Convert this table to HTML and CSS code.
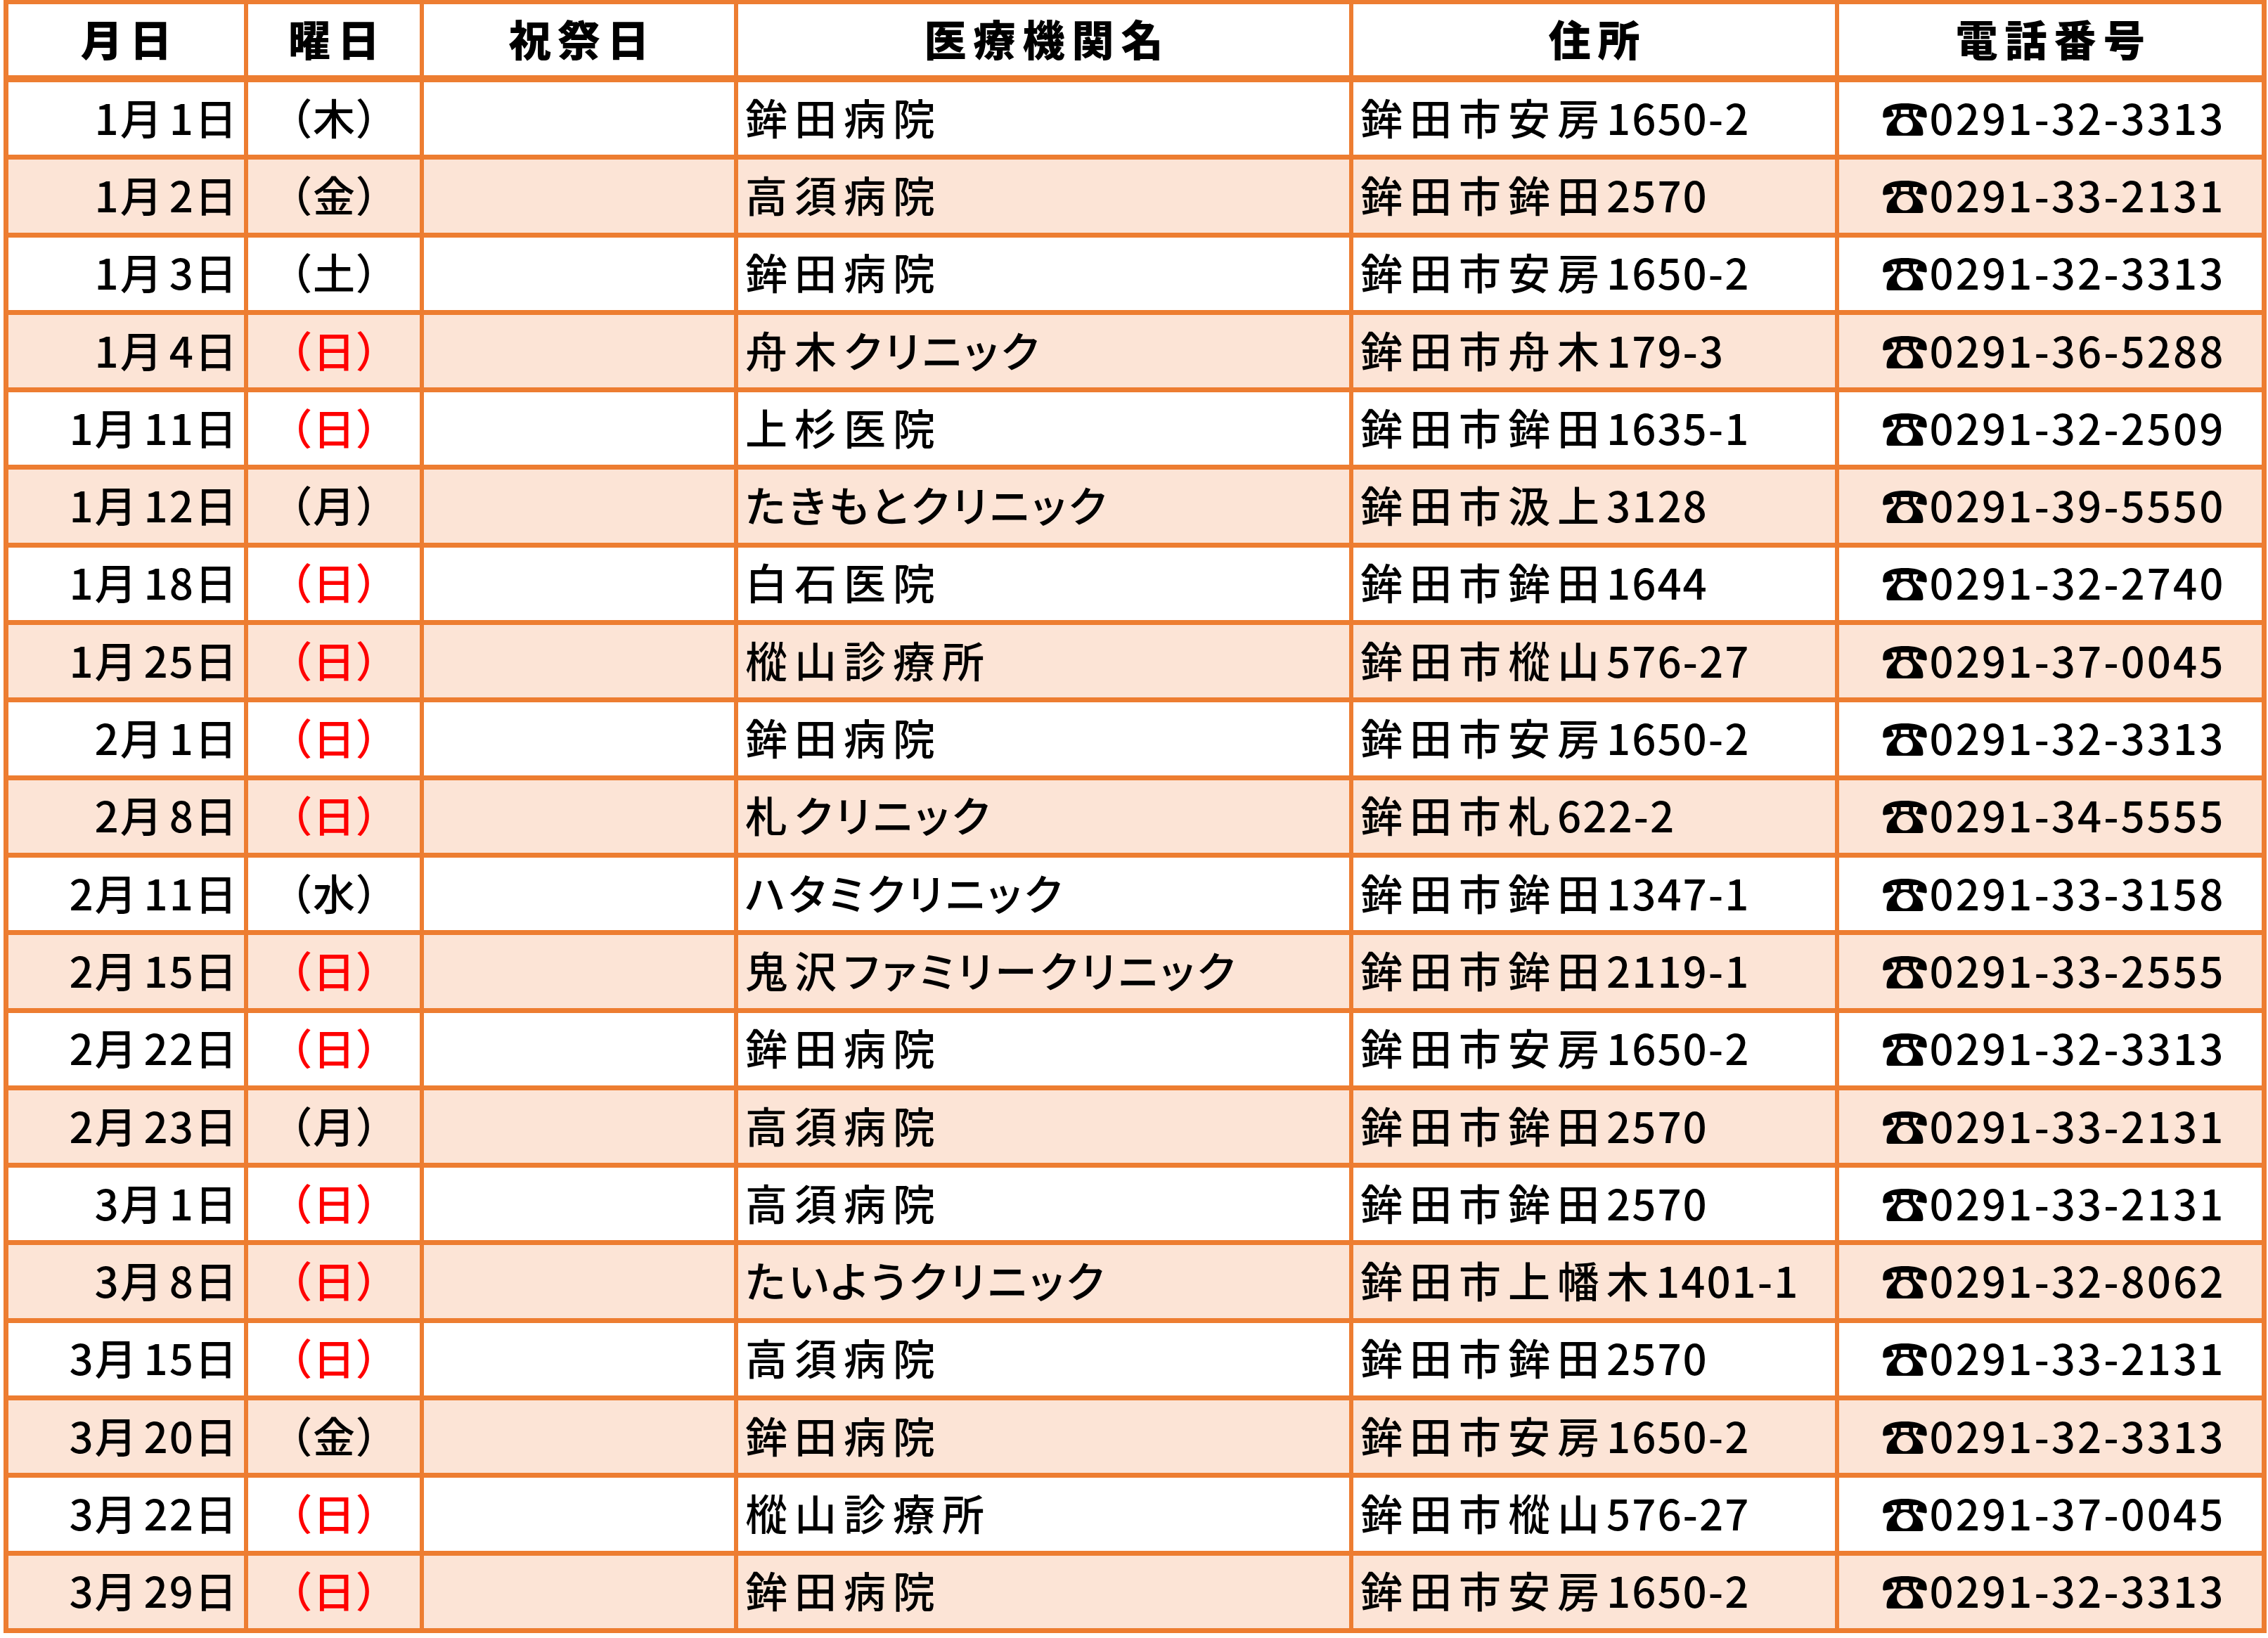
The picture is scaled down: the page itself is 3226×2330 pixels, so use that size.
FILE: index.html
```html
<!DOCTYPE html>
<html lang="ja">
<head>
<meta charset="utf-8">
<title>休日当番医</title>
<link rel="stylesheet" href="styles.css">
</head>
<body>
<div class="sheet">
  <div class="row head">
    <div class="c">月日</div>
    <div class="c">曜日</div>
    <div class="c">祝祭日</div>
    <div class="c">医療機関名</div>
    <div class="c">住所</div>
    <div class="c">電話番号</div>
  </div>
  <div class="row">
    <div class="c date"><span class="n">1</span>月<span class="n">1</span>日</div>
    <div class="c wd">（木）</div>
    <div class="c hol"></div>
    <div class="c name">鉾田病院</div>
    <div class="c addr">鉾田市安房<span class="n">1650-2</span></div>
    <div class="c tel"><span class="icon">☎</span>0291-32-3313</div>
  </div>
  <div class="row alt">
    <div class="c date"><span class="n">1</span>月<span class="n">2</span>日</div>
    <div class="c wd">（金）</div>
    <div class="c hol"></div>
    <div class="c name">高須病院</div>
    <div class="c addr">鉾田市鉾田<span class="n">2570</span></div>
    <div class="c tel"><span class="icon">☎</span>0291-33-2131</div>
  </div>
  <div class="row">
    <div class="c date"><span class="n">1</span>月<span class="n">3</span>日</div>
    <div class="c wd">（土）</div>
    <div class="c hol"></div>
    <div class="c name">鉾田病院</div>
    <div class="c addr">鉾田市安房<span class="n">1650-2</span></div>
    <div class="c tel"><span class="icon">☎</span>0291-32-3313</div>
  </div>
  <div class="row alt">
    <div class="c date"><span class="n">1</span>月<span class="n">4</span>日</div>
    <div class="c wd sun">（日）</div>
    <div class="c hol"></div>
    <div class="c name">舟木<span class="k">クリニック</span></div>
    <div class="c addr">鉾田市舟木<span class="n">179-3</span></div>
    <div class="c tel"><span class="icon">☎</span>0291-36-5288</div>
  </div>
  <div class="row">
    <div class="c date"><span class="n">1</span>月<span class="n">11</span>日</div>
    <div class="c wd sun">（日）</div>
    <div class="c hol"></div>
    <div class="c name">上杉医院</div>
    <div class="c addr">鉾田市鉾田<span class="n">1635-1</span></div>
    <div class="c tel"><span class="icon">☎</span>0291-32-2509</div>
  </div>
  <div class="row alt">
    <div class="c date"><span class="n">1</span>月<span class="n">12</span>日</div>
    <div class="c wd">（月）</div>
    <div class="c hol"></div>
    <div class="c name"><span class="k">たきもとクリニック</span></div>
    <div class="c addr">鉾田市汲上<span class="n">3128</span></div>
    <div class="c tel"><span class="icon">☎</span>0291-39-5550</div>
  </div>
  <div class="row">
    <div class="c date"><span class="n">1</span>月<span class="n">18</span>日</div>
    <div class="c wd sun">（日）</div>
    <div class="c hol"></div>
    <div class="c name">白石医院</div>
    <div class="c addr">鉾田市鉾田<span class="n">1644</span></div>
    <div class="c tel"><span class="icon">☎</span>0291-32-2740</div>
  </div>
  <div class="row alt">
    <div class="c date"><span class="n">1</span>月<span class="n">25</span>日</div>
    <div class="c wd sun">（日）</div>
    <div class="c hol"></div>
    <div class="c name">樅山診療所</div>
    <div class="c addr">鉾田市樅山<span class="n">576-27</span></div>
    <div class="c tel"><span class="icon">☎</span>0291-37-0045</div>
  </div>
  <div class="row">
    <div class="c date"><span class="n">2</span>月<span class="n">1</span>日</div>
    <div class="c wd sun">（日）</div>
    <div class="c hol"></div>
    <div class="c name">鉾田病院</div>
    <div class="c addr">鉾田市安房<span class="n">1650-2</span></div>
    <div class="c tel"><span class="icon">☎</span>0291-32-3313</div>
  </div>
  <div class="row alt">
    <div class="c date"><span class="n">2</span>月<span class="n">8</span>日</div>
    <div class="c wd sun">（日）</div>
    <div class="c hol"></div>
    <div class="c name">札<span class="k">クリニック</span></div>
    <div class="c addr">鉾田市札<span class="n">622-2</span></div>
    <div class="c tel"><span class="icon">☎</span>0291-34-5555</div>
  </div>
  <div class="row">
    <div class="c date"><span class="n">2</span>月<span class="n">11</span>日</div>
    <div class="c wd">（水）</div>
    <div class="c hol"></div>
    <div class="c name"><span class="k">ハタミクリニック</span></div>
    <div class="c addr">鉾田市鉾田<span class="n">1347-1</span></div>
    <div class="c tel"><span class="icon">☎</span>0291-33-3158</div>
  </div>
  <div class="row alt">
    <div class="c date"><span class="n">2</span>月<span class="n">15</span>日</div>
    <div class="c wd sun">（日）</div>
    <div class="c hol"></div>
    <div class="c name">鬼沢<span class="k">ファミリークリニック</span></div>
    <div class="c addr">鉾田市鉾田<span class="n">2119-1</span></div>
    <div class="c tel"><span class="icon">☎</span>0291-33-2555</div>
  </div>
  <div class="row">
    <div class="c date"><span class="n">2</span>月<span class="n">22</span>日</div>
    <div class="c wd sun">（日）</div>
    <div class="c hol"></div>
    <div class="c name">鉾田病院</div>
    <div class="c addr">鉾田市安房<span class="n">1650-2</span></div>
    <div class="c tel"><span class="icon">☎</span>0291-32-3313</div>
  </div>
  <div class="row alt">
    <div class="c date"><span class="n">2</span>月<span class="n">23</span>日</div>
    <div class="c wd">（月）</div>
    <div class="c hol"></div>
    <div class="c name">高須病院</div>
    <div class="c addr">鉾田市鉾田<span class="n">2570</span></div>
    <div class="c tel"><span class="icon">☎</span>0291-33-2131</div>
  </div>
  <div class="row">
    <div class="c date"><span class="n">3</span>月<span class="n">1</span>日</div>
    <div class="c wd sun">（日）</div>
    <div class="c hol"></div>
    <div class="c name">高須病院</div>
    <div class="c addr">鉾田市鉾田<span class="n">2570</span></div>
    <div class="c tel"><span class="icon">☎</span>0291-33-2131</div>
  </div>
  <div class="row alt">
    <div class="c date"><span class="n">3</span>月<span class="n">8</span>日</div>
    <div class="c wd sun">（日）</div>
    <div class="c hol"></div>
    <div class="c name"><span class="k">たいようクリニック</span></div>
    <div class="c addr">鉾田市上幡木<span class="n">1401-1</span></div>
    <div class="c tel"><span class="icon">☎</span>0291-32-8062</div>
  </div>
  <div class="row">
    <div class="c date"><span class="n">3</span>月<span class="n">15</span>日</div>
    <div class="c wd sun">（日）</div>
    <div class="c hol"></div>
    <div class="c name">高須病院</div>
    <div class="c addr">鉾田市鉾田<span class="n">2570</span></div>
    <div class="c tel"><span class="icon">☎</span>0291-33-2131</div>
  </div>
  <div class="row alt">
    <div class="c date"><span class="n">3</span>月<span class="n">20</span>日</div>
    <div class="c wd">（金）</div>
    <div class="c hol"></div>
    <div class="c name">鉾田病院</div>
    <div class="c addr">鉾田市安房<span class="n">1650-2</span></div>
    <div class="c tel"><span class="icon">☎</span>0291-32-3313</div>
  </div>
  <div class="row">
    <div class="c date"><span class="n">3</span>月<span class="n">22</span>日</div>
    <div class="c wd sun">（日）</div>
    <div class="c hol"></div>
    <div class="c name">樅山診療所</div>
    <div class="c addr">鉾田市樅山<span class="n">576-27</span></div>
    <div class="c tel"><span class="icon">☎</span>0291-37-0045</div>
  </div>
  <div class="row alt">
    <div class="c date"><span class="n">3</span>月<span class="n">29</span>日</div>
    <div class="c wd sun">（日）</div>
    <div class="c hol"></div>
    <div class="c name">鉾田病院</div>
    <div class="c addr">鉾田市安房<span class="n">1650-2</span></div>
    <div class="c tel"><span class="icon">☎</span>0291-32-3313</div>
  </div>
</div>
</body>
</html>
```

FILE: styles.css
```css
html, body {
  margin: 0;
  padding: 0;
  background: #ffffff;
}

.sheet {
  margin-left: 5px;
  width: 3219px;
  box-sizing: border-box;
  background: #ed7d31;
  padding: 6px 7px 7px 7px;
  display: flex;
  flex-direction: column;
  gap: 7px;
}

.row {
  display: grid;
  grid-template-columns: 335px 244px 441px 869px 685px 601px;
  column-gap: 6px;
  height: 103.3px;
}

.row.head {
  height: 101px;
  margin-bottom: 3px;
}

.c {
  background: #ffffff;
  display: flex;
  align-items: center;
  box-sizing: border-box;
  font-family: "Noto Sans CJK JP", "Noto Sans", sans-serif;
  font-size: 60px;
  font-weight: 500;
  line-height: 1;
  letter-spacing: 10px;
  font-feature-settings: "palt";
  color: #000000;
  white-space: nowrap;
  padding-bottom: 6px;
}

.row.alt .c {
  background: #fce4d6;
}

.head .c {
  justify-content: center;
  font-weight: 900;
  padding-left: 10px;
}

.date {
  justify-content: flex-end;
  padding-right: 0;
}

.wd {
  justify-content: center;
  letter-spacing: 3px;
  padding-left: 3px;
}

.wd.sun {
  color: #ff0000;
}

.name,
.addr {
  justify-content: flex-start;
  padding-left: 10px;
}

.k {
  letter-spacing: 4.5px;
}

.n {
  letter-spacing: 2px;
}

.tel {
  justify-content: center;
  letter-spacing: 3px;
  padding-left: 8px;
}

.icon {
  font-family: "Noto Sans CJK JP", "DejaVu Sans", sans-serif;
  font-size: 68px;
  letter-spacing: 0;
  margin-right: 1px;
}
```
